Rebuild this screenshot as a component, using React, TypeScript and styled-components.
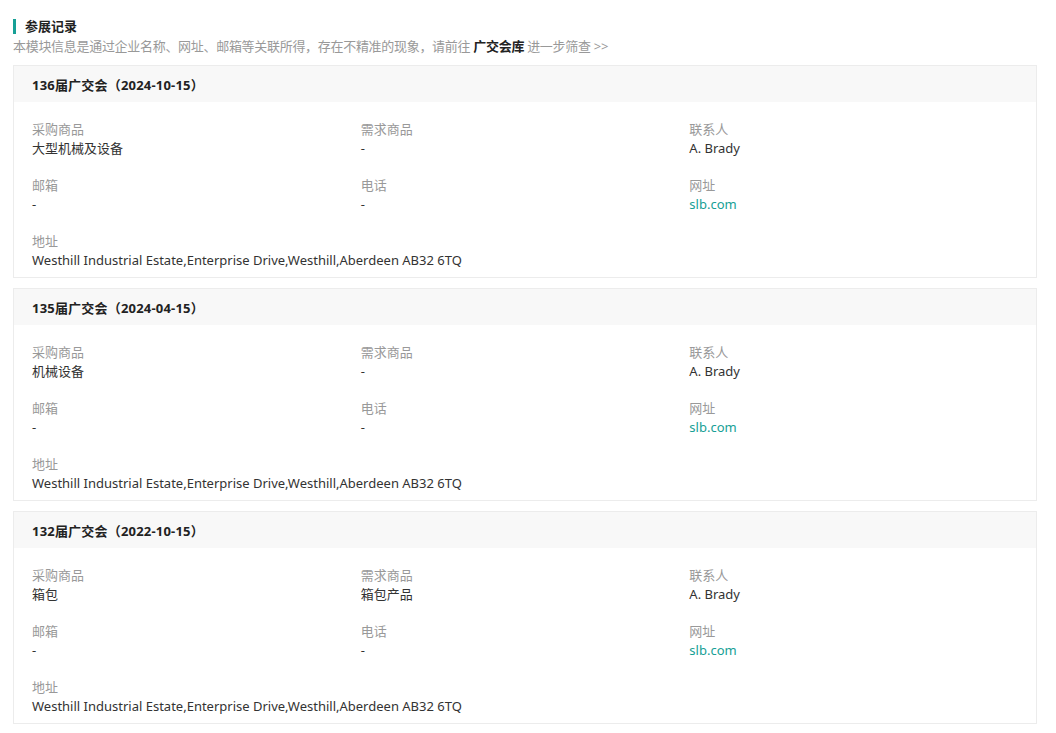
import React from 'react';
import styled, { createGlobalStyle } from 'styled-components';

type Record = {
    title: string;
    buy: string;
    need: string;
    contact: string;
    email: string;
    phone: string;
    site: string;
    address: string;
};

const records: Record[] = [
    {
        title: '136届广交会（2024-10-15）',
        buy: '大型机械及设备',
        need: '-',
        contact: 'A. Brady',
        email: '-',
        phone: '-',
        site: 'slb.com',
        address: 'Westhill Industrial Estate,Enterprise Drive,Westhill,Aberdeen AB32 6TQ',
    },
    {
        title: '135届广交会（2024-04-15）',
        buy: '机械设备',
        need: '-',
        contact: 'A. Brady',
        email: '-',
        phone: '-',
        site: 'slb.com',
        address: 'Westhill Industrial Estate,Enterprise Drive,Westhill,Aberdeen AB32 6TQ',
    },
    {
        title: '132届广交会（2022-10-15）',
        buy: '箱包',
        need: '箱包产品',
        contact: 'A. Brady',
        email: '-',
        phone: '-',
        site: 'slb.com',
        address: 'Westhill Industrial Estate,Enterprise Drive,Westhill,Aberdeen AB32 6TQ',
    },
];

const App: React.FC = () => {
    return (
        <Page>
            <GlobalStyle />
            <SectionTitle>参展记录</SectionTitle>
            <Hint>
                本模块信息是通过企业名称、网址、邮箱等关联所得，存在不精准的现象，请前往 <strong>广交会库</strong> 进一步筛查 &gt;&gt;
            </Hint>

            <CardList>
                {records.map((item) => (
                    <Card key={item.title}>
                        <CardHeader>{item.title}</CardHeader>
                        <CardBody>
                            <Field>
                                <Label>采购商品</Label>
                                <Value>{item.buy}</Value>
                            </Field>
                            <Field>
                                <Label>需求商品</Label>
                                <Value>{item.need}</Value>
                            </Field>
                            <Field>
                                <Label>联系人</Label>
                                <Value>{item.contact}</Value>
                            </Field>
                            <Field>
                                <Label>邮箱</Label>
                                <Value>{item.email}</Value>
                            </Field>
                            <Field>
                                <Label>电话</Label>
                                <Value>{item.phone}</Value>
                            </Field>
                            <Field>
                                <Label>网址</Label>
                                <Value $link>{item.site}</Value>
                            </Field>
                            <Field $wide>
                                <Label>地址</Label>
                                <Value>{item.address}</Value>
                            </Field>
                        </CardBody>
                    </Card>
                ))}
            </CardList>
        </Page>
    );
};

export default App;

const GlobalStyle = createGlobalStyle`
    html, body {
        margin: 0;
        padding: 0;
        background: #fff;
    }
    body {
        font-family: "Noto Sans", "Noto Sans CJK SC", sans-serif;
        font-size: 13px;
        color: #333;
    }
`;

const Page = styled.div`
    padding: 19px 19px 0 13px;
`;

const SectionTitle = styled.div`
    border-left: 3px solid #17a096;
    padding-left: 9px;
    font-size: 13px;
    font-weight: 700;
    line-height: 15px;
    color: #222;
`;

const Hint = styled.div`
    margin-top: 3px;
    font-size: 13px;
    line-height: 19px;
    letter-spacing: -0.3px;
    color: #999;

    strong {
        color: #222;
        font-weight: 700;
    }
`;

const CardList = styled.div`
    margin-top: 9px;
    display: flex;
    flex-direction: column;
    gap: 10px;
`;

const Card = styled.div`
    border: 1px solid #ececec;
`;

const CardHeader = styled.div`
    background: #f8f8f8;
    height: 36px;
    padding: 0 18px;
    display: flex;
    align-items: center;
    font-size: 13px;
    font-weight: 700;
    letter-spacing: 0.2px;
    color: #222;
`;

const CardBody = styled.div`
    display: grid;
    grid-template-columns: repeat(3, 1fr);
    row-gap: 18px;
    padding: 18px 18px 7px;
`;

const Field = styled.div<{ $wide?: boolean }>`
    grid-column: ${(p) => (p.$wide ? '1 / -1' : 'auto')};
    display: flex;
    flex-direction: column;
`;

const Label = styled.div`
    font-size: 13px;
    line-height: 19px;
    color: #999;
`;

const Value = styled.div<{ $link?: boolean }>`
    font-size: 13px;
    line-height: 19px;
    color: ${(p) => (p.$link ? '#17a096' : '#333')};
`;
